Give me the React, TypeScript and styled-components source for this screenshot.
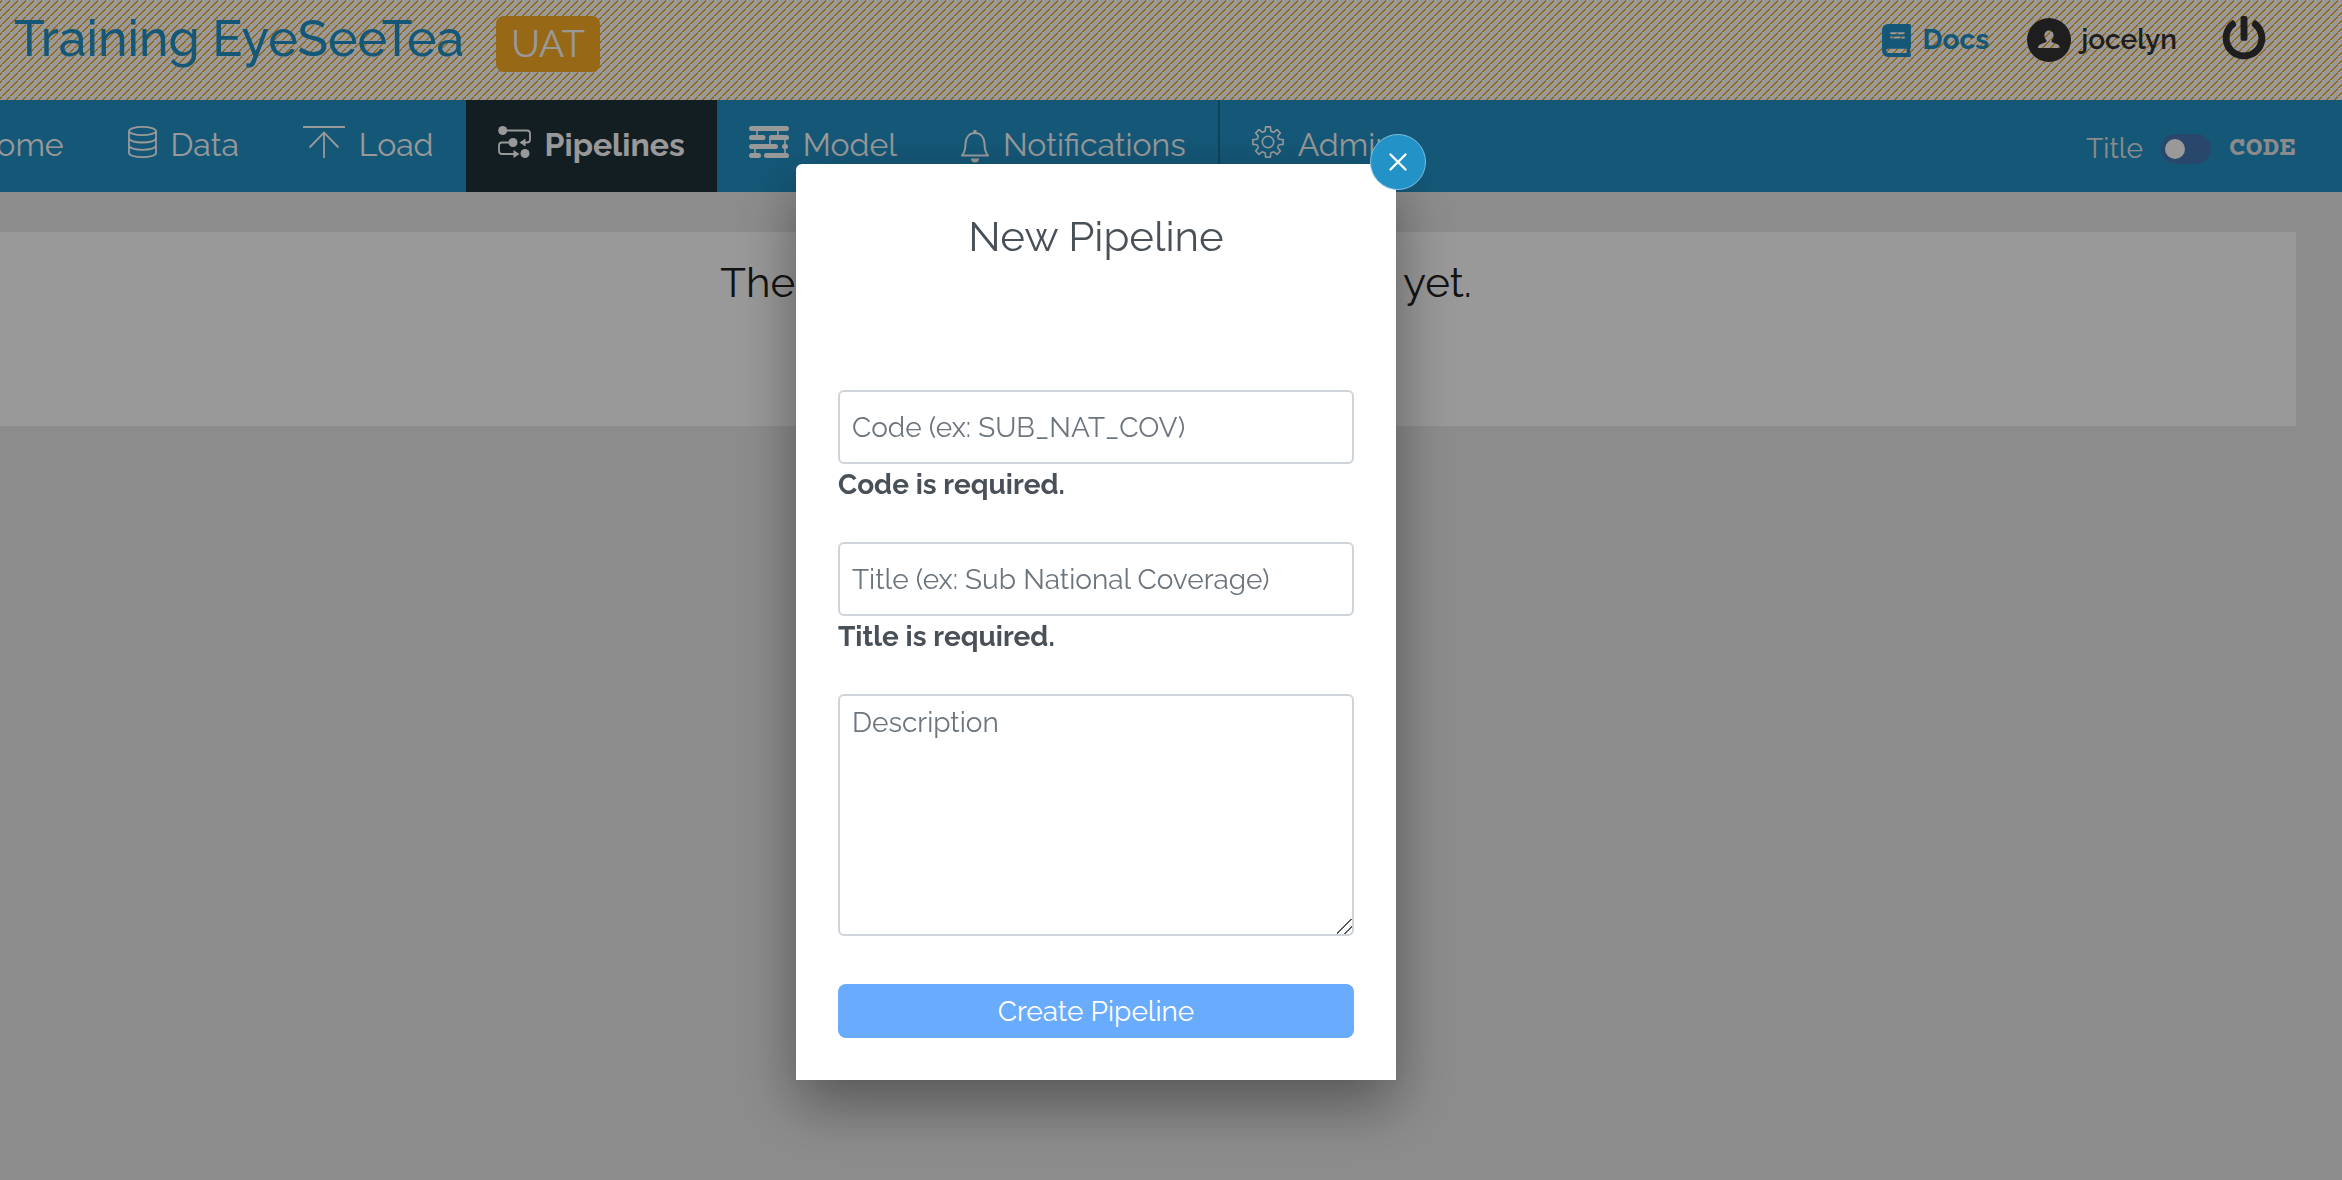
import React from "react";
import styled, { createGlobalStyle, css } from "styled-components";
import { FaBook, FaPowerOff } from "react-icons/fa";

const color = {
  brand: "#2392c7",
  dark: "#21323a",
  orange: "#fcae26",
  ink: "#212121",
  body: "#495057",
  muted: "#6c757d",
  line: "#ced4da",
  page: "#eaeaea",
};

const GlobalStyle = createGlobalStyle`
  *, *::before, *::after { box-sizing: border-box; }
  body {
    margin: 0;
    overflow: hidden;
    background: ${color.page};
    color: ${color.ink};
    font-family: Raleway, Lato, sans-serif;
    font-size: 28px;
    line-height: 42px;
  }
  button, input, textarea { font: inherit; }
  a { color: inherit; text-decoration: none; }
  h1, h2, p, ul { margin: 0; padding: 0; font-weight: 400; }
`;

const Shell = styled.div`
  min-height: 100vh;
  margin-left: -150px;
`;

const Header = styled.header`
  display: flex;
  align-items: flex-start;
  justify-content: space-between;
  height: 100px;
  padding: 16px 76px 0 164px;
  background-color: #fff;
  background-image: linear-gradient(
    135deg,
    transparent 48%,
    ${color.orange} 48%,
    ${color.orange} 57%,
    transparent 57%
  );
  background-size: 8px 8px;
`;

const Brand = styled.div`
  display: flex;
  align-items: flex-start;
  gap: 32px;
`;

const SiteName = styled.h1`
  color: ${color.brand};
  font-size: 50px;
  line-height: 46px;
  font-weight: 500;
`;

const EnvBadge = styled.span`
  padding: 0 15px;
  border-radius: 8px;
  background: ${color.orange};
  color: #fff;
  font-size: 38px;
  line-height: 56px;
`;

const UserLinks = styled.div`
  display: flex;
  align-items: flex-start;
  gap: 38px;
`;

const UserLink = styled.a<{ $brand?: boolean }>`
  display: flex;
  align-items: center;
  gap: 10px;
  line-height: 48px;
  font-weight: ${(p) => (p.$brand ? 700 : 600)};
  color: ${(p) => (p.$brand ? color.brand : "#333")};
`;

const PowerButton = styled.button`
  display: flex;
  margin-left: 7px;
  padding: 0;
  border: 0;
  background: none;
  color: #333;
  font-size: 44px;
`;

const NavBar = styled.nav`
  display: flex;
  align-items: stretch;
  justify-content: space-between;
  height: 92px;
  padding: 0 46px 0 43px;
  background: ${color.brand};
  color: #fff;
`;

const NavList = styled.ul`
  display: flex;
  list-style: none;
`;

const NavItem = styled.li<{ $divided?: boolean }>`
  display: flex;
  ${(p) =>
    p.$divided &&
    css`
      border-left: 2px solid #1c6f99;
    `}
`;

const NavLink = styled.a<{ $active?: boolean }>`
  display: flex;
  align-items: flex-start;
  gap: 14px;
  padding: 26px 32px 0;
  font-size: 32px;
  line-height: 38px;
  ${(p) =>
    p.$active &&
    css`
      background: ${color.dark};
      font-weight: 700;
    `}
`;

const Icon = styled.svg`
  display: block;
  flex: none;
  overflow: visible;
`;

const ModeSwitch = styled.div`
  display: flex;
  align-items: center;
  gap: 18px;
  padding-top: 6px;
  color: #e8e8e8;
`;

const CodeText = styled.span`
  font-family: "Courier Prime", "Nimbus Mono PS", "Cutive Mono", "Roboto Slab", "Liberation Mono", monospace;
  font-weight: 700;
`;

const Toggle = styled.input`
  appearance: none;
  display: flex;
  align-items: center;
  width: 50px;
  height: 30px;
  margin: 0;
  padding: 0 4px;
  border-radius: 15px;
  background: #4377b1;

  &::before {
    content: "";
    width: 20px;
    height: 20px;
    border-radius: 50%;
    background: #fff;
  }
`;

const Main = styled.main`
  padding: 40px 46px;
`;

const EmptyCard = styled.section`
  min-height: 194px;
  padding: 20px;
  background: #fff;
  text-align: center;
`;

const EmptyText = styled.p`
  font-size: 42px;
  line-height: 62px;
`;

const Overlay = styled.div`
  position: fixed;
  inset: 0 0 0 -150px;
  display: flex;
  align-items: flex-start;
  justify-content: center;
  padding-top: 164px;
  background: rgba(0, 0, 0, 0.4);
`;

const Dialog = styled.div`
  position: relative;
  width: 600px;
  padding: 42px;
  border-radius: 6px 6px 0 0;
  background: #fff;
  color: ${color.body};
  box-shadow: 0 24px 60px rgba(0, 0, 0, 0.4);
`;

const CloseButton = styled.button`
  position: absolute;
  top: -30px;
  right: -30px;
  display: grid;
  place-items: center;
  width: 56px;
  height: 56px;
  padding: 0;
  border: 1px solid #7fbfe0;
  border-radius: 50%;
  background: ${color.brand};
  color: #fff;
`;

const DialogTitle = styled.h2`
  margin-bottom: 122px;
  font-size: 42px;
  line-height: 62px;
  text-align: center;
`;

const Form = styled.form`
  display: flex;
  flex-direction: column;
`;

const Field = styled.div`
  display: flex;
  flex-direction: column;
  margin-bottom: 36px;
`;

const control = css`
  width: 100%;
  border: 2px solid ${color.line};
  border-radius: 6px;
  background: #fff;
  color: ${color.body};

  &::placeholder {
    color: ${color.muted};
    opacity: 1;
  }
`;

const TextInput = styled.input`
  ${control}
  height: 74px;
  padding: 0 12px;
`;

const TextArea = styled.textarea`
  ${control}
  display: block;
  height: 242px;
  margin-bottom: 48px;
  padding: 6px 12px;
  resize: both;

  &::-webkit-resizer {
    background: linear-gradient(
      135deg,
      transparent 46%,
      #555 46%,
      #555 52%,
      transparent 52%,
      transparent 72%,
      #555 72%,
      #555 78%,
      transparent 78%
    );
  }
`;

const ErrorText = styled.strong`
  font-weight: 700;
`;

const SubmitButton = styled.button`
  height: 54px;
  padding: 2px 0 0;
  border: 0;
  border-radius: 8px;
  background: #69abfc;
  color: #fff;
`;

const HomeIcon = () => (
  <Icon width="34" height="32" viewBox="0 0 34 32" fill="none" stroke="currentColor" strokeWidth="2">
    <path d="M2 16L17 2l15 14M6 13v18h22V13" />
  </Icon>
);

const DataIcon = () => (
  <Icon width="29" height="32" viewBox="0 0 29 32" fill="none" stroke="currentColor" strokeWidth="1.8">
    <ellipse cx="14.5" cy="5" rx="13.5" ry="4.2" />
    <path d="M1 5v22c0 2.400 6 4.200 13.500 4.200S28 29.400 28 27V5M1 12.300c0 2.400 6 4.200 13.500 4.200S28 14.700 28 12.300M1 19.600c0 2.400 6 4.200 13.500 4.200S28 22 28 19.600" />
  </Icon>
);

const LoadIcon = () => (
  <Icon width="42" height="32" viewBox="0 0 42 32" fill="none" stroke="currentColor" strokeWidth="1.800">
    <path d="M0 1h42M21 32V7M6.500 21.500L21 6.500l14.500 15" />
  </Icon>
);

const PipelineIcon = () => (
  <Icon width="33" height="32" viewBox="0 0 33 32" fill="none" stroke="currentColor" strokeWidth="1.800">
    <path d="M5 4.500h24q3 0 3 3v6q0 3-3 3h-3M15 16.500H4q-3 0-3 3V25q0 3 3 3h12" />
    <g fill="currentColor" stroke="none">
      <circle cx="4.700" cy="4.500" r="4.500" />
      <circle cx="15" cy="16.500" r="4.500" />
      <circle cx="27" cy="27.500" r="4.500" />
      <path d="M21.500 16.500l6-4v8zM21.500 28l-6-4v8z" />
    </g>
  </Icon>
);

const ModelIcon = () => (
  <Icon width="40" height="32" viewBox="0 0 40 32" fill="none" stroke="currentColor" strokeLinecap="round">
    <path strokeWidth="5" d="M2.500 2.500h35M2.500 11.500h11.500M22.500 11.500h15M2.500 20.500h24M35.500 20.500h1M2.500 29.500h7M17.500 29.500h20" />
    <path strokeWidth="1.600" d="M8 4v6M29 4v6M21 13v6M36 13v6M6 22v6M36 22v6" />
  </Icon>
);

const BellIcon = () => (
  <Icon width="28" height="38" viewBox="0 0 28 38" fill="none" stroke="currentColor" strokeWidth="2">
    <path strokeLinejoin="round" d="M1 29.500c3.500-4 3.300-8 3.500-12C4.900 11 8.500 7 14 7s9.100 4 9.500 10.500c.2 4 0 8 3.500 12z" />
    <path d="M14 7V4" strokeWidth="3" />
    <path d="M10 32.500h8a4 4 0 0 1-8 0z" fill="currentColor" stroke="none" />
  </Icon>
);

const toothPath = Array.from({ length: 8 }, (_, i) => {
  const at = (radius: number, degrees: number) => {
    const angle = ((i * 45 + degrees) * Math.PI) / 180;
    return `${(16 + radius * Math.sin(angle)).toFixed(2)} ${(16 - radius * Math.cos(angle)).toFixed(2)}`;
  };
  return `${i ? "L" : "M"}${at(11.5, -14)}L${at(15.3, -9)}L${at(15.3, 9)}L${at(11.5, 14)}Q${at(10.6, 22.5)} ${at(11.5, 31)}`;
}).join("");

const GearIcon = () => (
  <Icon width="32" height="32" viewBox="0 0 32 32" fill="none" stroke="currentColor" strokeWidth="1.600" strokeLinejoin="round">
    <path d={`${toothPath}Z`} />
    <circle cx="16" cy="16" r="5.700" />
  </Icon>
);

const UserIcon = () => (
  <Icon width="44" height="44" viewBox="0 0 44 44" fill="currentColor" fillRule="evenodd">
    <path d="M22 0a22 22 0 1 0 0 44a22 22 0 1 0 0-44zM22 12.500c2.900 0 4.600 2 4.600 5 0 2.200-.9 3.700-2 4.700v1.800c3 1.400 8.400 2 8.400 6H11c0-4 5.400-4.600 8.400-6v-1.800c-1.100-1-2-2.500-2-4.700 0-3 1.700-5 4.600-5z" />
  </Icon>
);

const CloseIcon = () => (
  <Icon width="18" height="18" viewBox="0 0 18 18" stroke="currentColor" strokeWidth="2.400" strokeLinecap="round">
    <path d="M1.500 1.500l15 15M16.500 1.500l-15 15" />
  </Icon>
);

const navItems = [
  { label: "Home", icon: <HomeIcon /> },
  { label: "Data", icon: <DataIcon /> },
  { label: "Load", icon: <LoadIcon /> },
  { label: "Pipelines", icon: <PipelineIcon />, active: true },
  { label: "Model", icon: <ModelIcon /> },
  { label: "Notifications", icon: <BellIcon /> },
  { label: "Admin", icon: <GearIcon />, divided: true },
];

export default function App() {
  return (
    <>
      <GlobalStyle />
      <Shell>
        <Header>
          <Brand>
            <SiteName>Training EyeSeeTea</SiteName>
            <EnvBadge>UAT</EnvBadge>
          </Brand>
          <UserLinks>
            <UserLink href="#docs" $brand>
              <FaBook size={33} />
              Docs
            </UserLink>
            <UserLink href="#profile">
              <UserIcon />
              jocelyn
            </UserLink>
            <PowerButton type="button" aria-label="Log out">
              <FaPowerOff />
            </PowerButton>
          </UserLinks>
        </Header>
        <NavBar>
          <NavList>
            {navItems.map((item) => (
              <NavItem key={item.label} $divided={item.divided}>
                <NavLink href={`#${item.label.toLowerCase()}`} $active={item.active}>
                  {item.icon}
                  {item.label}
                </NavLink>
              </NavItem>
            ))}
          </NavList>
          <ModeSwitch>
            <label htmlFor="display-mode">Title</label>
            <Toggle id="display-mode" type="checkbox" role="switch" />
            <CodeText>CODE</CodeText>
          </ModeSwitch>
        </NavBar>
        <Main>
          <EmptyCard>
            <EmptyText>There are no pipelines in view here yet.</EmptyText>
          </EmptyCard>
        </Main>
      </Shell>
      <Overlay>
        <Dialog role="dialog" aria-modal="true" aria-labelledby="dialog-title">
          <CloseButton type="button" aria-label="Close">
            <CloseIcon />
          </CloseButton>
          <DialogTitle id="dialog-title">New Pipeline</DialogTitle>
          <Form onSubmit={(event) => event.preventDefault()}>
            <Field>
              <TextInput aria-label="Code" placeholder="Code (ex: SUB_NAT_COV)" />
              <ErrorText>Code is required.</ErrorText>
            </Field>
            <Field>
              <TextInput aria-label="Title" placeholder="Title (ex: Sub National Coverage)" />
              <ErrorText>Title is required.</ErrorText>
            </Field>
            <TextArea aria-label="Description" placeholder="Description" />
            <SubmitButton type="submit">Create Pipeline</SubmitButton>
          </Form>
        </Dialog>
      </Overlay>
    </>
  );
}
